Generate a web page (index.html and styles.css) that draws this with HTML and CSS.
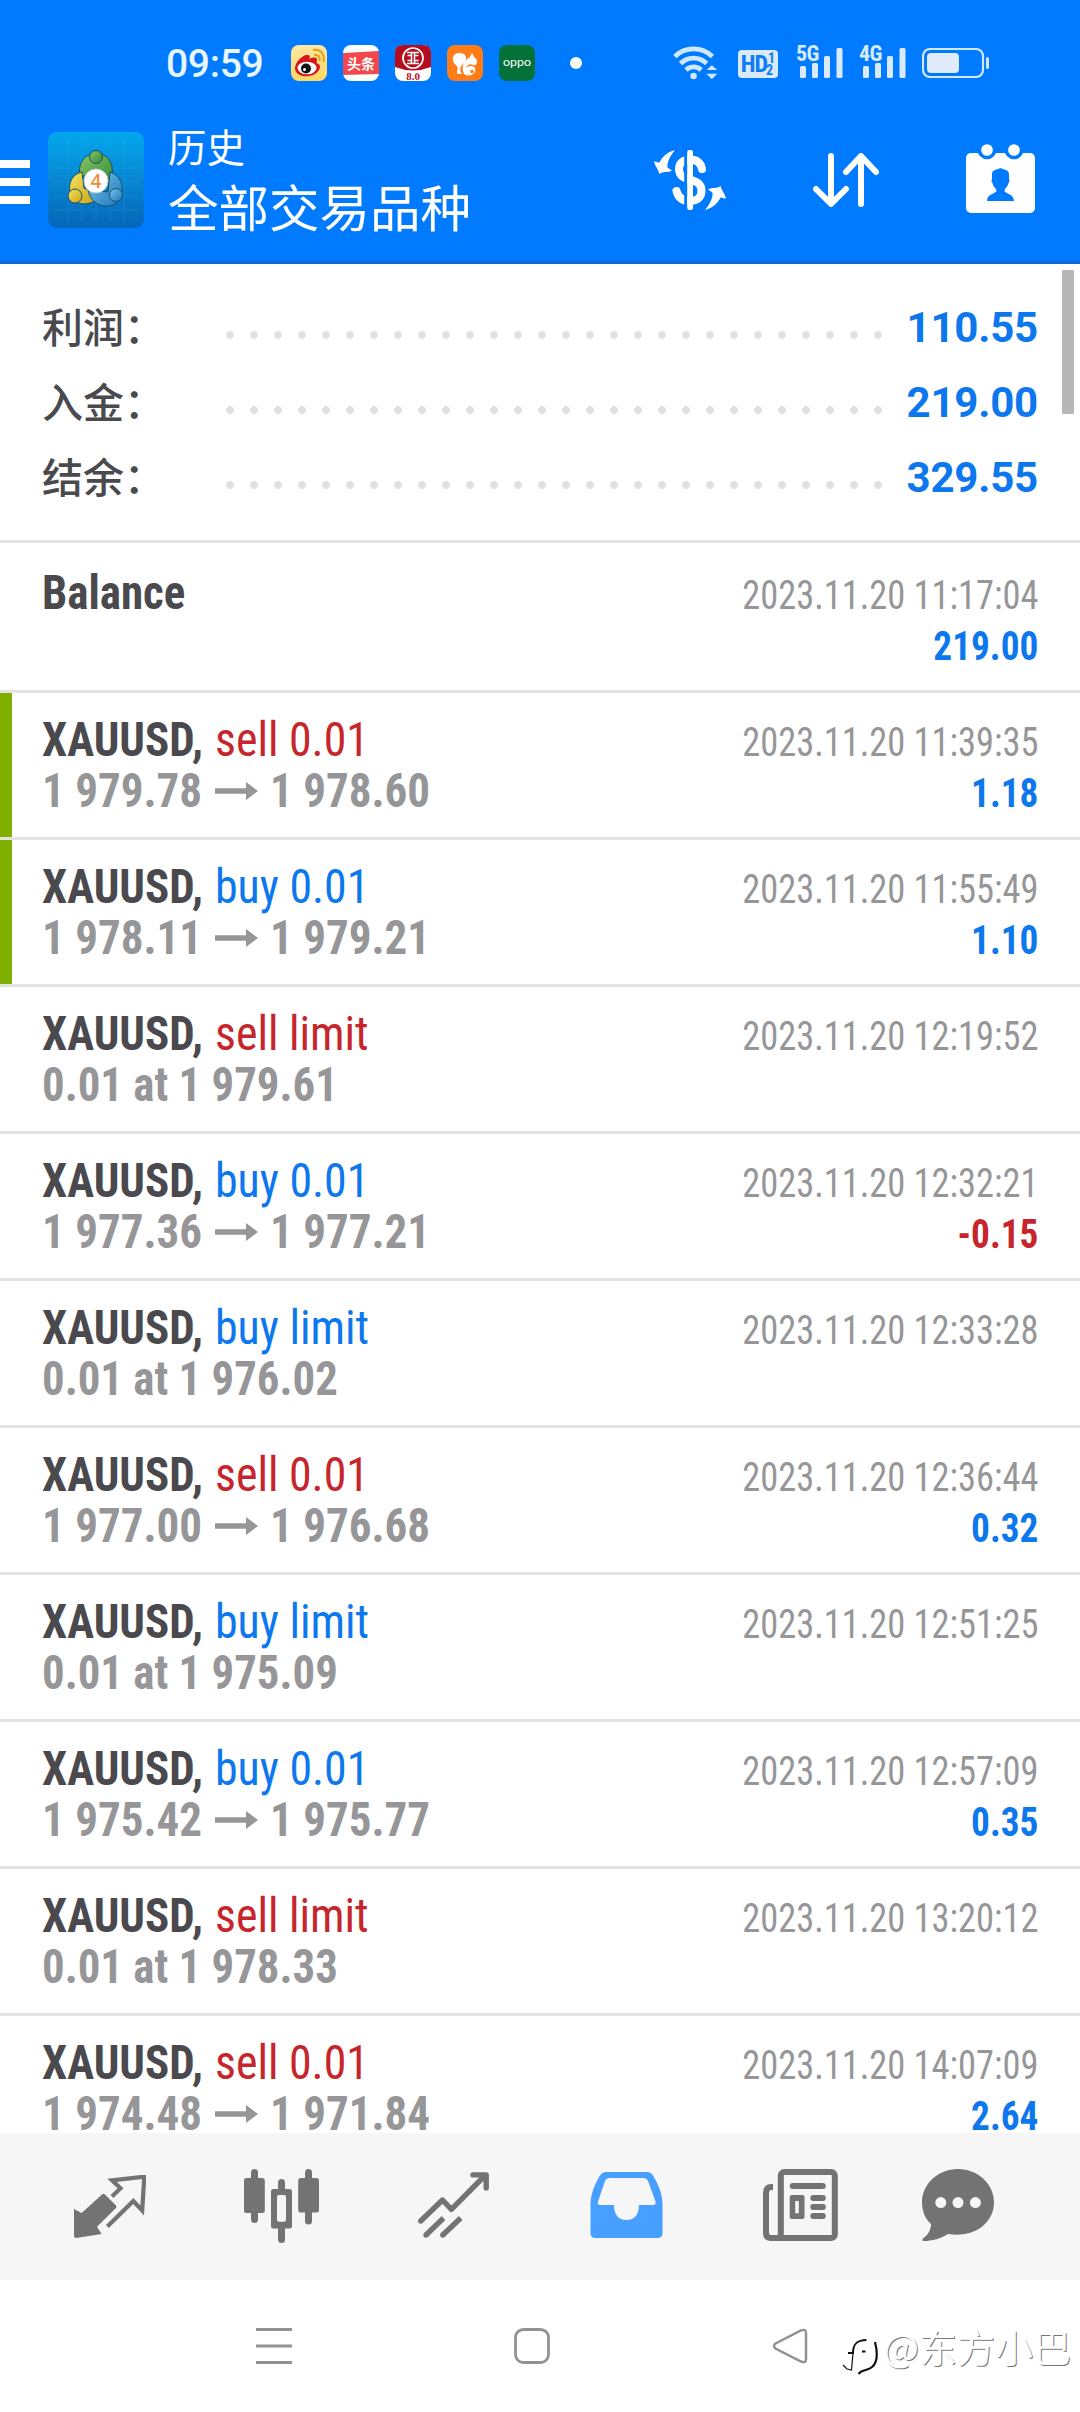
FILE: index.html
```html
<!DOCTYPE html>
<html lang="zh-CN">
<head>
<meta charset="utf-8">
<title>历史</title>
<link rel="stylesheet" href="styles.css">
</head>
<body>
<svg class="defs" width="0" height="0" aria-hidden="true">
  <symbol id="arrow" viewBox="0 0 43 18"><path d="M0 6.2H31V0L43 9L31 18V11.8H0Z"/></symbol>
  <symbol id="bars" viewBox="0 0 44 30"><rect x="0" y="18" width="6" height="12" rx="1.5"/><rect x="12" y="15" width="6" height="15" rx="1.5"/><rect x="24" y="8" width="6" height="22" rx="1.5"/><rect x="36.500" y="0" width="6" height="30" rx="1.5"/></symbol>
</svg>
<header class="header">
  <div class="status">
    <span class="clock">09:59</span>
    <div class="apps">
      <svg viewBox="0 0 36 36"><defs><linearGradient id="wb" x1="0" y1="0" x2="0" y2="1"><stop offset="0" stop-color="#ffe7a4"/><stop offset="1" stop-color="#ffd860"/></linearGradient></defs><rect width="36" height="36" rx="8" fill="url(#wb)"/><path d="M4 23C4 17 12 9 17 10C19 10 19 12 18.500 14C22 12 26 12 26 15L25.500 18C29 19 30 22 28 25C25 30 18 32 12 31C7 30 4 27 4 23Z" fill="#d9151c"/><ellipse cx="16" cy="23" rx="9.500" ry="6.300" fill="#fff"/><circle cx="15" cy="23.500" r="5" fill="#111"/><circle cx="13.500" cy="24.500" r="1.500" fill="#fff"/><path d="M23 10C27 9 29.500 12 28.500 16M22 5C30 4 34 9 32.500 17" fill="none" stroke="#eaa21f" stroke-width="2.200"/></svg>
      <svg viewBox="0 0 36 36"><rect width="36" height="36" rx="8" fill="#fff"/><path d="M0 8L36 6V29L0 30Z" fill="#f0484c"/><text x="18" y="24" class="t-head">头条</text></svg>
      <svg viewBox="0 0 36 36"><rect width="36" height="36" rx="8" fill="#fff"/><path d="M0 8Q0 0 8 0H28Q36 0 36 8V22Q18 29 0 22Z" fill="#b50d1d"/><circle cx="18" cy="13" r="10" fill="none" stroke="#fff" stroke-width="1.700"/><path d="M12 7.500H24M12 18.500H24M12.500 10.500H16.500V15.500H12.500M23.500 10.500H19.500V15.500H23.500M16.500 7.500V10M19.500 7.500V10M16.500 16V18M19.500 16V18" fill="none" stroke="#fff" stroke-width="1.500"/><text x="18" y="35" class="t-ver">8.0</text></svg>
      <svg viewBox="0 0 36 36"><rect width="36" height="36" rx="8" fill="#ff7c16"/><path d="M11 29C8 27 13 24 9 20C3 16 6 7 13 8C20 8 21 15 16 19C13 22 12 25 15 29Z" fill="#fff"/><path d="M17 29C13 20 19 14 23 12L25 8L27 12C31 15 31 18 28 20.500C25 20 22 17 19 23C23 19 30 21 28 27Q23 33 17 29Z" fill="#fff"/><circle cx="25" cy="26.500" r="1.800" fill="#ff7c16"/></svg>
      <svg viewBox="0 0 36 36"><rect width="36" height="36" rx="8" fill="#047138"/><text x="18" y="20.500" class="t-oppo" textLength="28" lengthAdjust="spacingAndGlyphs">oppo</text></svg>
    </div>
    <i class="more"></i>
    <svg class="wifi" viewBox="0 0 46 36"><g fill="none" stroke="#cfe8ff" stroke-width="4.800"><path d="M1.800 11.500A27 27 0 0 1 39.400 11.500"/><path d="M7.500 18.500A18.500 18.500 0 0 1 33.700 18.500"/><path d="M13 25A11 11 0 0 1 28.200 25"/></g><g fill="#cfe8ff"><circle cx="20.600" cy="31" r="3.200"/><path d="M33.500 25L38.800 20.300L44.200 25ZM33.500 28.700H44.200L38.800 34.200Z"/></g></svg>
    <div class="hd"><b>HD</b><span><i>1</i><i>2</i></span></div>
    <div class="signal"><b>5G</b><svg viewBox="0 0 44 30"><use href="#bars"/></svg></div>
    <div class="signal signal-2"><b>4G</b><svg viewBox="0 0 44 30"><use href="#bars"/></svg></div>
    <svg class="battery" viewBox="0 0 68 30"><rect x="1" y="1" width="60" height="28" rx="7" fill="none" stroke="#cfe8ff" stroke-width="2.200"/><rect x="5" y="5" width="32" height="20" rx="4" fill="#dfeafa"/><rect x="64" y="9" width="3" height="12" rx="1.500" fill="#cfe8ff"/></svg>
  </div>
  <div class="appbar">
    <div class="menu"><i></i><i></i><i></i></div>
    <svg class="logo" viewBox="0 0 96 96">
      <defs>
        <linearGradient id="bg" x1="0" y1="0" x2="0" y2="1"><stop offset="0" stop-color="#04a8ec"/><stop offset=".5" stop-color="#0786d2"/><stop offset="1" stop-color="#0565b8"/></linearGradient>
        <linearGradient id="gr" x1="0" y1="0" x2="1" y2="1"><stop offset="0" stop-color="#8cc66a"/><stop offset="1" stop-color="#2e8a35"/></linearGradient>
        <linearGradient id="ye" x1="0" y1="0" x2="1" y2="1"><stop offset="0" stop-color="#f6e35c"/><stop offset="1" stop-color="#c9a51a"/></linearGradient>
        <linearGradient id="bl" x1="0" y1="0" x2="1" y2="1"><stop offset="0" stop-color="#7cc6ee"/><stop offset="1" stop-color="#1b76b8"/></linearGradient>
      </defs>
      <rect width="96" height="96" rx="9" fill="url(#bg)"/>
      <path d="M20 8V90M34 8V90M48 8V90M62 8V90M76 8V90M6 22H90M6 36H90M6 50H90M6 64H90M6 78H90" stroke="#3ab0ea" stroke-width=".8" opacity=".3"/>
      <g stroke="#174f68" stroke-width="1">
        <path d="M32 44C29 30 39 21 48 21C59 21 66 31 64 42C63 47 61 51 58 54L50 38L37 44Z" fill="url(#gr)"/>
        <path d="M34 40C24 42 20 51 22 61C24 70 33 74 42 71C46 70 49 68 49 62L36 56Z" fill="url(#ye)"/>
        <path d="M62 40C72 43 75 52 74 60C73 69 66 75 57 74C48 73 42 68 40 58L60 60Z" fill="url(#bl)"/>
        <circle cx="48" cy="25" r="6.500" fill="url(#gr)"/><circle cx="27" cy="64" r="7" fill="url(#ye)"/><circle cx="68" cy="63" r="6.500" fill="url(#bl)"/>
      </g>
      <circle cx="48" cy="49" r="12" fill="#fff" stroke="#c4cdd0"/><text x="48" y="56" class="t-four">4</text>
    </svg>
    <div class="titles"><div class="sub">历史</div><h1>全部交易品种</h1></div>
    <svg class="act-money" viewBox="0 0 72 60"><path d="M48 19C46.500 12 42 9.500 36 9.500C28.500 9.500 25 14 25 19C25 34 47.500 25 47.500 41C47.500 47 43 51 36 51C28.500 51 24 47 22.500 41" fill="none" stroke="#fff" stroke-width="8" stroke-linecap="round"/><path d="M31.700 3V58" stroke="#007aff" stroke-width="3"/><rect x="33.200" y="0" width="5.800" height="60" rx="2" fill="#fff"/><g fill="#fff"><path id="swap" d="M21 0C13 2 8 7 5.500 12.500C4 13 2 11 0 11.500C1 16 4 19 5.500 24C9 21 14 23 18 20.500L13.500 17.500C13 11 17 5 21 0Z"/><use href="#swap" transform="rotate(180 36 30)"/></g></svg>
    <svg class="act-sort" viewBox="0 0 66 54"><path d="M18 3V50M3 36L18 51L33 36M48 51V4M33 19L48 3L63 19" fill="none" stroke="#fff" stroke-width="6" stroke-linecap="round" stroke-linejoin="round"/></svg>
    <svg class="act-cal" viewBox="0 0 69 69"><rect x="0" y="9" width="69" height="60" rx="5" fill="#fff"/><g fill="#fff" stroke="#007aff" stroke-width="3.500"><circle cx="21" cy="6" r="7.600"/><circle cx="48" cy="6" r="7.600"/></g><path d="M26 30C26 26 30 26 34.500 24C39 26 43 26 43 30V35Q44.500 37 42.500 39C42 43 38.500 44 38.500 47C40 50 48 50 48 57H21C21 50 29 50 30.500 47C30.500 44 27 43 26.500 39Q24.500 37 26 35Z" fill="#007aff"/></svg>
  </div>
</header>
<main class="content">
  <i class="scrollbar"></i>
  <section class="summary">
    <div class="sum"><span class="label">利润：</span><i class="dots"></i><b>110.55</b></div>
    <div class="sum"><span class="label">入金：</span><i class="dots"></i><b>219.00</b></div>
    <div class="sum"><span class="label">结余：</span><i class="dots"></i><b>329.55</b></div>
  </section>
  <section class="deals">
    <div class="row first"><div class="left"><div class="line"><b class="sym">Balance</b></div></div><div class="right"><div class="date">2023.11.20 11:17:04</div><div class="val">219.00</div></div></div>
    <div class="row closed"><div class="left"><div class="line"><b class="sym">XAUUSD,</b><span class="side sell">sell 0.01</span></div><div class="line price"><b>1 979.78</b><svg><use href="#arrow"/></svg><b>1 978.60</b></div></div><div class="right"><div class="date">2023.11.20 11:39:35</div><div class="val">1.18</div></div></div>
    <div class="row closed"><div class="left"><div class="line"><b class="sym">XAUUSD,</b><span class="side buy">buy 0.01</span></div><div class="line price"><b>1 978.11</b><svg><use href="#arrow"/></svg><b>1 979.21</b></div></div><div class="right"><div class="date">2023.11.20 11:55:49</div><div class="val">1.10</div></div></div>
    <div class="row"><div class="left"><div class="line"><b class="sym">XAUUSD,</b><span class="side sell">sell limit</span></div><div class="line order"><b>0.01 at 1 979.61</b></div></div><div class="right"><div class="date">2023.11.20 12:19:52</div></div></div>
    <div class="row"><div class="left"><div class="line"><b class="sym">XAUUSD,</b><span class="side buy">buy 0.01</span></div><div class="line price"><b>1 977.36</b><svg><use href="#arrow"/></svg><b>1 977.21</b></div></div><div class="right"><div class="date">2023.11.20 12:32:21</div><div class="val loss">-0.15</div></div></div>
    <div class="row"><div class="left"><div class="line"><b class="sym">XAUUSD,</b><span class="side buy">buy limit</span></div><div class="line order"><b>0.01 at 1 976.02</b></div></div><div class="right"><div class="date">2023.11.20 12:33:28</div></div></div>
    <div class="row"><div class="left"><div class="line"><b class="sym">XAUUSD,</b><span class="side sell">sell 0.01</span></div><div class="line price"><b>1 977.00</b><svg><use href="#arrow"/></svg><b>1 976.68</b></div></div><div class="right"><div class="date">2023.11.20 12:36:44</div><div class="val">0.32</div></div></div>
    <div class="row"><div class="left"><div class="line"><b class="sym">XAUUSD,</b><span class="side buy">buy limit</span></div><div class="line order"><b>0.01 at 1 975.09</b></div></div><div class="right"><div class="date">2023.11.20 12:51:25</div></div></div>
    <div class="row"><div class="left"><div class="line"><b class="sym">XAUUSD,</b><span class="side buy">buy 0.01</span></div><div class="line price"><b>1 975.42</b><svg><use href="#arrow"/></svg><b>1 975.77</b></div></div><div class="right"><div class="date">2023.11.20 12:57:09</div><div class="val">0.35</div></div></div>
    <div class="row"><div class="left"><div class="line"><b class="sym">XAUUSD,</b><span class="side sell">sell limit</span></div><div class="line order"><b>0.01 at 1 978.33</b></div></div><div class="right"><div class="date">2023.11.20 13:20:12</div></div></div>
    <div class="row"><div class="left"><div class="line"><b class="sym">XAUUSD,</b><span class="side sell">sell 0.01</span></div><div class="line price"><b>1 974.48</b><svg><use href="#arrow"/></svg><b>1 971.84</b></div></div><div class="right"><div class="date">2023.11.20 14:07:09</div><div class="val">2.64</div></div></div>
  </section>
</main>
<nav class="tabs">
  <svg class="tab-quotes" viewBox="0 0 72 63"><path d="M0 34L7.600 38L28 19.500Q29.300 18 31 19.500L42 30.500Q43 31.700 42 33L23 51.700L27.600 59L2 63Q0 63 0 61Z"/><path d="M38 21.500L46.500 13.300L38 5.300L70.300 1.700L68.200 35.500L59.300 26L33.400 51.500" fill="none" stroke="#737373" stroke-width="4.200"/></svg>
  <svg class="tab-chart" viewBox="0 0 75 75"><rect y="9" width="20.800" height="35" rx="2.500"/><rect x="7" width="7" height="54" rx="3.500"/><path fill-rule="evenodd" d="M29.500 20H45.500Q48 20 48 22.500V57Q48 59.500 45.500 59.500H29.500Q27 59.500 27 57V22.500Q27 20 29.500 20ZM35 26Q33 26 33 28V50.500Q33 52.700 35 52.700H40Q42 52.700 42 50.500V28Q42 26 40 26Z"/><rect x="34" y="10" width="7" height="14" rx="3.500"/><rect x="34" y="55" width="7" height="19" rx="3.500"/><rect x="54.200" y="9" width="20.800" height="34.500" rx="2.500"/><rect x="61" width="7" height="55.500" rx="3.500"/></svg>
  <svg class="tab-trade" viewBox="0 0 71 66"><g fill="none" stroke="#737373" stroke-width="5.400" stroke-linejoin="round"><path stroke-linecap="round" d="M2.700 49L24.500 28L33.400 37.300L67 3.500M55 2.900H68.200V16"/><path d="M8 63L25.500 46M24.800 63L42.700 46"/></g><circle cx="8" cy="63" r="2.700"/><circle cx="24.800" cy="63" r="2.700"/></svg>
  <svg class="tab-history" viewBox="0 0 73 66"><path fill="#479fff" fill-rule="evenodd" d="M16 0H57Q61 0 63 3.500C68 12 72.500 21 72.500 33V61Q72.500 66 67.500 66H5.500Q.5 66 .5 61V33C.5 21 5 12 10 3.500Q12 0 16 0ZM19.500 6Q16.500 6 15 9L8 29.500Q7 33 10 33H24C24 42 28 48 36.500 48C45 48 49 42 49 33H62.500Q66.500 33 65.500 29.500L58 9Q56.500 6 53.500 6Z"/></svg>
  <svg class="tab-news" viewBox="0 0 75 72"><rect x="17.800" y="3" width="54" height="66" rx="3.500" fill="none" stroke="#737373" stroke-width="6"/><path d="M10 18H8.500Q3 18 3 24V64Q3 69 8 69H22" fill="none" stroke="#737373" stroke-width="6"/><rect x="26.700" y="14" width="36.100" height="6" rx="3"/><path fill-rule="evenodd" d="M29 26H39.500Q41.500 26 41.500 28V48Q41.500 50 39.500 50H29Q26.700 50 26.700 48V28Q26.700 26 29 26ZM32.200 32V44.300H35.800V32Z"/><rect x="47.300" y="26" width="15.500" height="6" rx="3"/><rect x="47.300" y="35" width="15.500" height="6" rx="3"/><rect x="47.300" y="44" width="15.500" height="6" rx="3"/></svg>
  <svg class="tab-chat" viewBox="0 0 72 72"><path d="M36 0C56 0 72 15 72 33.300C72 54 53 69 26 65C18 70 9 72 2 72Q-1 72 1 69.500C6 66 9 61 9 55C3 50 0 42 0 33.300C0 15 16 0 36 0Z"/><g fill="#f6f6f6"><circle cx="18.800" cy="33.600" r="5.500"/><circle cx="36" cy="33.600" r="5.500"/><circle cx="53.400" cy="33.600" r="5.500"/></g></svg>
</nav>
<footer class="sysnav">
  <svg class="recents" viewBox="0 0 36 36"><path d="M0 1.500H36M0 18H36M0 34.500H36" stroke="#929292" stroke-width="3"/></svg>
  <svg class="home" viewBox="0 0 36 36"><rect x="1.500" y="1.500" width="33" height="33" rx="8" fill="none" stroke="#929292" stroke-width="2.800"/></svg>
  <svg class="back" viewBox="0 0 35 36"><path d="M2.500 15.500L28 2.500Q33 .5 33 5V31Q33 35.500 28 33.500L2.500 20.500Q-.5 18 2.500 15.500Z" fill="none" stroke="#929292" stroke-width="2.500"/></svg>
  <div class="watermark"><svg viewBox="0 0 36 42"><g fill="none" stroke="#111"><path stroke-width="2" d="M6 17H11C11 8 15 4 24.500 4"/><path stroke-width="2.200" d="M20 15.500H23.500M33 6C36 18 35 27 30 31C26 35 20 33 16.500 38"/><path stroke-width="1.200" d="M11 17L9.500 34L5 33L1 29"/></g></svg><span>@东方小巴</span></div>
</footer>
</body>
</html>
```
FILE: styles.css
```css
* { box-sizing: border-box; }
body { margin: 0; width: 1080px; height: 2412px; overflow: hidden; display: flex; flex-direction: column; background: #fff; font-family: Roboto, "Noto Sans CJK SC", sans-serif; }
i { font-style: normal; }
svg { display: block; flex: none; }
.defs { position: absolute; }

.header { height: 264px; flex: none; background: #007aff; border-bottom: 3px solid #1167d6; color: #fff; }
.status { height: 108px; display: flex; align-items: flex-start; padding-left: 166px; }
.clock { width: 125px; font-size: 39px; font-weight: 500; line-height: 46px; margin-top: 41px; color: #e9f6ff; letter-spacing: -.3px; }
.apps { display: flex; gap: 16px; margin-top: 45px; }
.apps svg { width: 36px; height: 36px; }
.t-head { font: 700 14px "Noto Sans CJK SC", sans-serif; fill: #fff; text-anchor: middle; }
.t-ver { font: 700 11px "Liberation Serif", serif; fill: #b50d1d; text-anchor: middle; }
.t-oppo { font: 400 12px Lato, sans-serif; fill: #fff; text-anchor: middle; }
.t-four { font: 500 19px "Noto Sans", sans-serif; fill: #f28a2e; text-anchor: middle; }
.more { width: 12px; height: 12px; border-radius: 50%; background: #fff; margin: 57px 0 0 35px; }
.wifi { width: 46px; height: 36px; margin: 45px 0 0 91px; }
.hd { width: 40px; height: 28px; border-radius: 4px; background: #d8eafc; margin: 50px 0 0 19px; color: #0e7cf5; display: flex; justify-content: center; gap: 1px; font-family: "Roboto Condensed", sans-serif; }
.hd b { font-size: 24px; line-height: 28px; letter-spacing: -1px; }
.hd span { display: flex; flex-direction: column; padding-top: 2px; font-size: 14px; font-weight: 700; line-height: 12px; }
.hd i + i { margin-left: -2px; }
.signal { width: 48px; height: 34px; margin: 45px 0 0 18px; display: grid; }
.signal-2 { margin-left: 15px; }
.signal b { grid-area: 1 / 1; font: 700 22px/18px "Roboto Condensed", sans-serif; color: #d8ecff; letter-spacing: -.5px; }
.signal svg { grid-area: 1 / 1; width: 44px; height: 30px; margin: 3px 0 0 4px; fill: #d8eafc; }
.battery { width: 68px; height: 30px; margin: 48px 0 0 15px; }

.appbar { height: 153px; display: flex; align-items: flex-start; }
.menu { width: 30px; margin: 52px 18px 0 0; display: flex; flex-direction: column; gap: 10px; }
.menu i { height: 8px; background: #fff; }
.logo { width: 96px; height: 96px; margin-top: 24px; }
.titles { width: 487px; margin-left: 24px; padding-top: 10px; font-family: "Noto Sans CJK SC", sans-serif; white-space: nowrap; }
.sub { font-size: 38.500px; line-height: 54px; font-weight: 400; }
h1 { margin: 0; font-size: 50.500px; line-height: 66px; font-weight: 400; }
.act-money { width: 72px; height: 60px; margin: 42px 0 0 -1px; }
.act-sort { width: 66px; height: 54px; margin: 45px 0 0 87px; }
.act-cal { width: 69px; height: 69px; margin: 36px 0 0 87px; overflow: visible; }

.content { height: 1869px; flex: none; overflow: hidden; position: relative; }
.scrollbar { position: absolute; top: 6px; right: 6px; width: 12px; height: 144px; background: #b7b7b7; border-radius: 1px; }
.summary { height: 279px; padding: 26px 42px 0; border-bottom: 3px solid #e3e3e3; }
.sum { height: 75px; display: flex; align-items: flex-start; }
.label { width: 176px; font: 500 41px/70px "Noto Sans CJK SC", sans-serif; color: #4a494e; white-space: nowrap; }
.dots { width: 672px; height: 24px; margin-top: 33px; background: radial-gradient(circle at center, #e0e0e0 3.500px, transparent 4.300px) 0 0 / 24px 24px repeat-x; }
.sum b { flex: 1; text-align: right; font-size: 42px; line-height: 75px; letter-spacing: -.2px; color: #0d77ee; }

.row { height: 147px; display: flex; justify-content: space-between; padding: 21px 42px 0; border-bottom: 3px solid #e3e3e3; font-family: "Roboto Condensed", sans-serif; }
.row.first { height: 150px; padding-top: 24px; }
.row.closed { background: linear-gradient(#7fb000, #7fb000) no-repeat 0 0 / 12px 144px; }
.line { height: 51px; display: flex; align-items: center; font-size: 48px; line-height: 51px; white-space: nowrap; }
.sym { width: 172px; color: #4a494e; transform: scaleX(.937); transform-origin: left; }
.side { font-weight: 430; transform: scaleX(.955); transform-origin: left; margin-left: 1px; }
.sell { color: #c6252c; }
.buy { color: #0d77ee; }
.price, .order { color: #969698; }
.price b { width: 173px; transform: scaleX(.938); transform-origin: left; }
.price svg { width: 43px; height: 18px; margin-right: 12px; fill: #969698; }
.order b { transform: scaleX(.934); transform-origin: left; }
.right { padding-top: 3px; text-align: right; font-size: 40px; line-height: 51px; white-space: nowrap; }
.date { font-weight: 430; color: #969698; transform: scaleX(.91); transform-origin: right; }
.val { font-weight: 700; color: #0d77ee; transform: scaleX(.932); transform-origin: right; }
.val.loss { color: #c6252c; }

.tabs { height: 147px; flex: none; background: #f6f6f6; display: flex; align-items: flex-start; fill: #737373; }
.tab-quotes { width: 72px; height: 63px; margin: 42px 0 0 74px; }
.tab-chart { width: 75px; height: 75px; margin: 36px 0 0 98px; }
.tab-trade { width: 71px; height: 66px; margin: 39px 0 0 99px; }
.tab-history { width: 73px; height: 66px; margin: 39px 0 0 101px; }
.tab-news { width: 75px; height: 72px; margin: 36px 0 0 100px; }
.tab-chat { width: 72px; height: 72px; margin: 36px 0 0 84px; }

.sysnav { flex: 1; display: flex; align-items: flex-start; padding-top: 48px; }
.recents { width: 36px; height: 36px; margin-left: 256px; }
.home { width: 36px; height: 36px; margin-left: 222px; }
.back { width: 35px; height: 36px; margin-left: 223px; }
.watermark { display: flex; margin: -5px 0 0 34px; }
.watermark svg { width: 36px; height: 42px; margin-top: 13px; }
.watermark span { margin: 0 0 0 5px; font: 400 38px/46px "Noto Sans CJK SC", sans-serif; color: #fff; text-shadow: 1px 1px 0 #777; white-space: nowrap; }
```
